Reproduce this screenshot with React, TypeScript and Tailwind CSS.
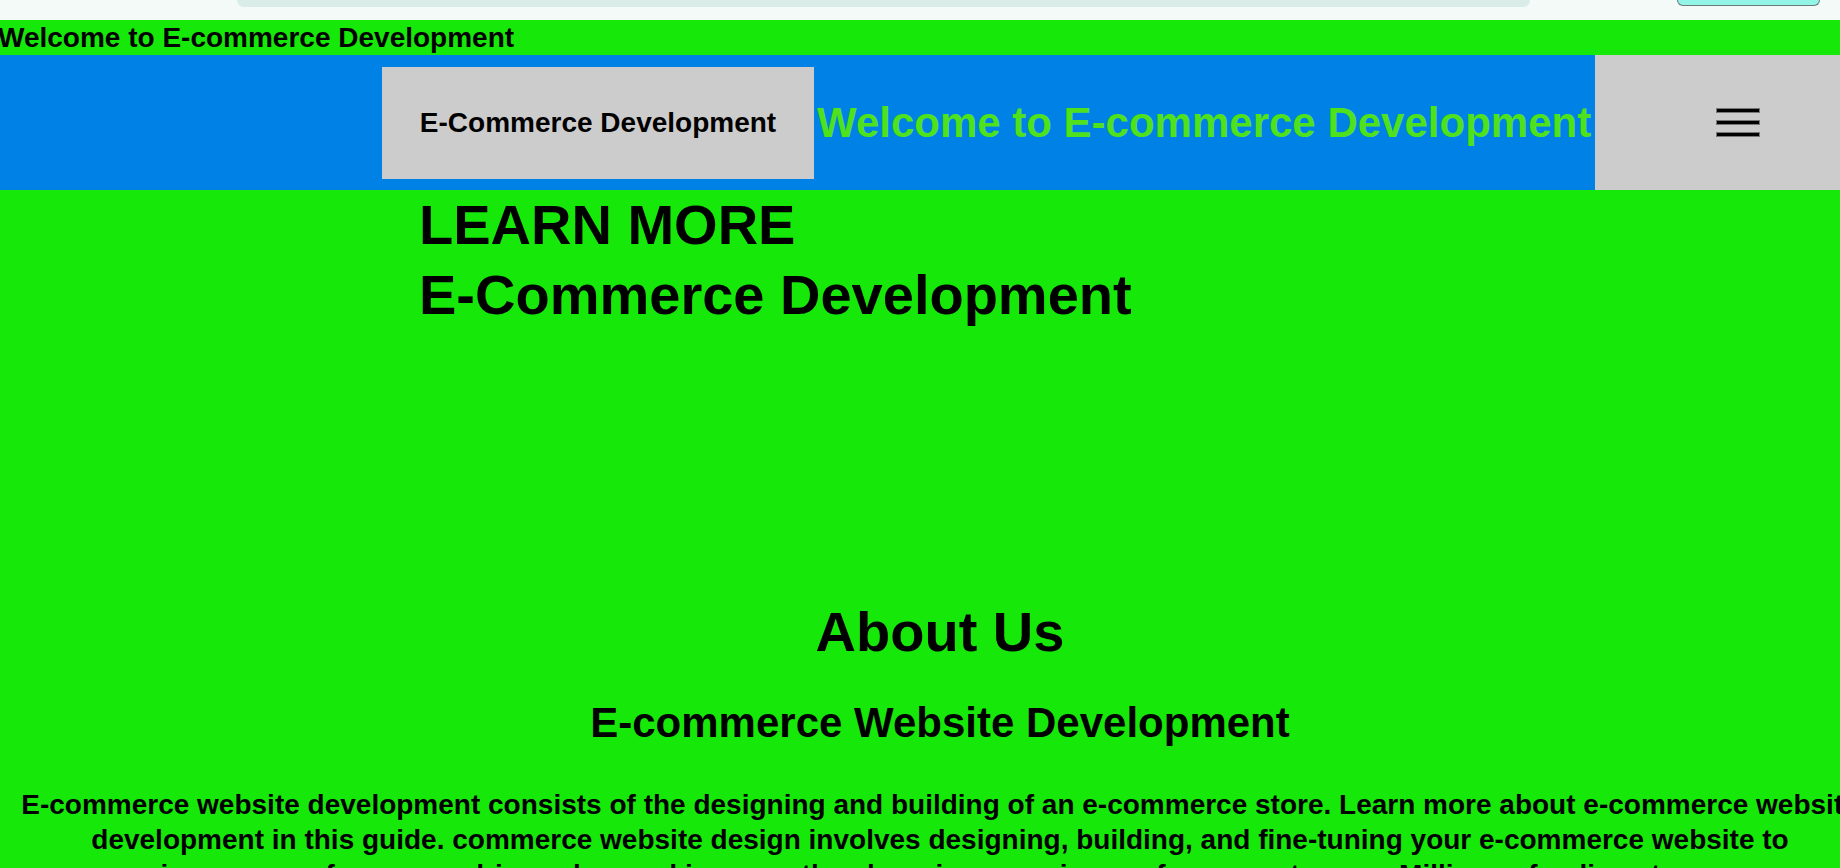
import React from 'react';

function Hamburger() {
  return (
    <div className="flex flex-col gap-[7px]">
      <span className="block w-[44px] h-[5px] bg-black border border-[#777]"></span>
      <span className="block w-[44px] h-[5px] bg-black border border-[#777]"></span>
      <span className="block w-[44px] h-[5px] bg-black border border-[#777]"></span>
    </div>
  );
}

function App() {
  return (
    <div className="w-full h-screen overflow-hidden bg-[#16e80a] font-['Liberation_Sans',Arial,sans-serif] text-black">
      {/* browser strip on top */}
      <div className="flex h-[20px] bg-[#f3faf8] items-start">
        <div className="ml-[237px] w-[1293px] h-[7px] rounded-b-[20px] bg-[#d9ece8]"></div>
        <div className="ml-[147px] w-[143px] h-[6px] rounded-b-[14px] border border-t-0 border-[#6b7b78] bg-[#92f5e5]"></div>
      </div>

      <div className="w-[1880px]">
        <h1 className="-ml-[2px] h-[35px] text-[28px] leading-[35px] font-bold whitespace-nowrap">
          Welcome to E-commerce Development
        </h1>

        <nav className="flex h-[135px] bg-[#0081e6] items-center">
          <div className="ml-[382px] w-[432px] h-[112px] bg-[#cccccc] flex items-center justify-center">
            <span className="text-[28px] font-bold whitespace-nowrap">E-Commerce Development</span>
          </div>
          <h2 className="ml-[3px] text-[42px] leading-[52px] font-bold text-[#4fe21c] whitespace-nowrap">
            Welcome to E-commerce Development
          </h2>
          <div className="ml-auto w-[285px] h-full bg-[#cccccc] flex items-center justify-center">
            <Hamburger />
          </div>
        </nav>

        <div className="pl-[419px] text-[56px] leading-[70px] font-bold">
          <p>LEARN MORE</p>
          <p>E-Commerce Development</p>
        </div>

        <section className="mt-[267px] text-center">
          <h2 className="text-[56px] leading-[70px] font-bold">About Us</h2>
          <h3 className="mt-[30px] text-[42px] leading-[52px] font-bold">E-commerce Website Development</h3>
          <p className="mt-[38px] text-[28px] leading-[35px] font-bold whitespace-nowrap">
            E-commerce website development consists of the designing and building of an e-commerce store. Learn more about e-commerce website
            <br />
            development in this guide. commerce website design involves designing, building, and fine-tuning your e-commerce website to
            <br />
            increase performance, drive sales, and improve the shopping experience of your customers. Millions of online stores
          </p>
        </section>
      </div>
    </div>
  );
}

export default App;
